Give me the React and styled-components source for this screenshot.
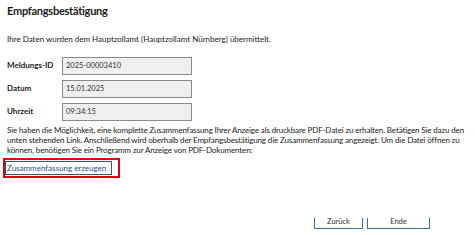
import React from "react";
import styled, { createGlobalStyle } from "styled-components";

const Global = createGlobalStyle`
  html, body { margin: 0; padding: 0; background: #ffffff; }
  body { font-family: Lato, "Open Sans", "Liberation Sans", sans-serif; color: #222; }
  * { box-sizing: border-box; }
`;

const Page = styled.div`
  width: 475px;
  height: 235px;
  display: flex;
  flex-direction: column;
  padding: 3px 0 0 7px;
  overflow: hidden;
`;

const Title = styled.h1`
  margin: 0;
  font-size: 11px;
  letter-spacing: -0.25px;
  line-height: 16px;
  font-weight: 700;
  color: #1a1a1a;
`;

const Intro = styled.p`
  margin: 15px 0 0;
  font-size: 8px;
  line-height: 10px;
`;

const Form = styled.div`
  margin-top: 13px;
  display: grid;
  grid-template-columns: 55px 130px;
  grid-auto-rows: 18px;
  row-gap: 5px;
  align-items: center;
`;

const Label = styled.label`
  font-size: 8px;
  font-weight: 700;
  line-height: 10px;
  margin-top: -3px;
`;

const Field = styled.div`
  height: 18px;
  border: 1.5px solid #8a8a8a;
  background: #efefef;
  font-size: 7.5px;
  line-height: 15px;
  padding-left: 3px;
  color: #333;
`;

const Text = styled.p`
  margin: 4px 0 0;
  width: 468px;
  font-size: 8px;
  letter-spacing: -0.13px;
  line-height: 10px;
`;

const Highlight = styled.div`
  margin: 3px 0 0 -4px;
  width: 117px;
  height: 20px;
  border: 2px solid #e3000f;
  padding: 1px 6px 1px 0;
`;

const LinkButton = styled.a`
  display: block;
  height: 14px;
  border: 1px solid #3b5573;
  font-size: 8px;
  line-height: 12px;
  padding-left: 1px;
  color: #1f4f8a;
  text-decoration: none;
  white-space: nowrap;
`;

const Buttons = styled.div`
  margin-top: auto;
  display: flex;
  justify-content: flex-end;
  gap: 4px;
  padding: 0 45px 6px 0;
`;

const Button = styled.button`
  width: ${(p) => p.$w}px;
  height: 11px;
  border: 1.5px solid #3d6ea6;
  border-top: none;
  background: #fff;
  font-family: inherit;
  font-size: 7.5px;
  line-height: 8px;
  padding: 0;
  color: #333;
  display: flex;
  justify-content: center;
  align-items: flex-start;
`;

export default function App() {
  return (
    <>
      <Global />
      <Page>
        <Title>Empfangsbestätigung</Title>
        <Intro>Ihre Daten wurden dem Hauptzollamt (Hauptzollamt Nürnberg) übermittelt.</Intro>
        <Form>
          <Label>Meldungs-ID</Label>
          <Field>2025-00003410</Field>
          <Label>Datum</Label>
          <Field>15.01.2025</Field>
          <Label>Uhrzeit</Label>
          <Field>09:34:15</Field>
        </Form>
        <Text>
          Sie haben die Möglichkeit, eine komplette Zusammenfassung Ihrer Anzeige als druckbare PDF-Datei zu erhalten. Betätigen Sie dazu den unten stehenden Link. Anschließend wird oberhalb der Empfangsbestätigung die Zusammenfassung angezeigt. Um die Datei öffnen zu können, benötigen Sie ein Programm zur Anzeige von PDF-Dokumenten:
        </Text>
        <Highlight>
          <LinkButton href="#">Zusammenfassung erzeugen</LinkButton>
        </Highlight>
        <Buttons>
          <Button $w={49}>Zurück</Button>
          <Button $w={63}>Ende</Button>
        </Buttons>
      </Page>
    </>
  );
}
